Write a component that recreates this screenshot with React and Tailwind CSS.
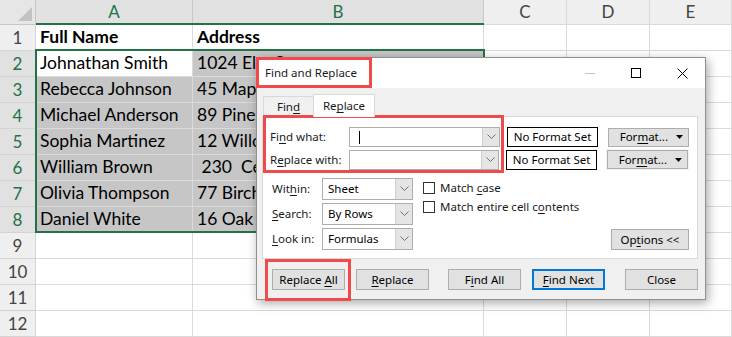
import React from "react";

const COLS = [36, 157, 291, 83, 83, 82];
const LETTERS = ["A", "B", "C", "D", "E"];

const rows = [
  ["Full Name", "Address"],
  ["Johnathan Smith", "1024 Elm Street"],
  ["Rebecca Johnson", "45 Maple Avenue"],
  ["Michael Anderson", "89 Pine Road"],
  ["Sophia Martinez", "12 Willow Lane"],
  ["William Brown", " 230  Cedar Drive"],
  ["Olivia Thompson", "77 Birch Court"],
  ["Daniel White", "16 Oak Street"],
  ["", ""],
  ["", ""],
  ["", ""],
  ["", ""],
];

const cellFont = { fontFamily: "Lato, 'Liberation Sans', sans-serif" };
const uiFont = { fontFamily: "'Segoe UI', 'Noto Sans', sans-serif" };

// letra subrayada (tecla de acceso)
function Ak({ text, k }) {
  const i = text.indexOf(k);
  if (i < 0) return <span>{text}</span>;
  return (
    <span className="whitespace-pre">
      {text.slice(0, i)}
      <span className="underline underline-offset-2">{k}</span>
      {text.slice(i + 1)}
    </span>
  );
}

function Chevron() {
  return (
    <svg width="9" height="6" viewBox="0 0 9 6">
      <polyline points="0.5,0.5 4.5,4.5 8.5,0.5" fill="none" stroke="#707070" strokeWidth="1" />
    </svg>
  );
}

function Combo({ w, h, children }) {
  return (
    <div
      className="flex bg-white border border-[#adadad] box-border"
      style={{ width: w, height: h }}
    >
      <div className="flex-1 flex items-center pl-[5px] text-black">{children}</div>
      <div className="w-[17px] bg-[#e5e5e5] border-l border-[#cfcfcf] flex items-center justify-center">
        <Chevron />
      </div>
    </div>
  );
}

function Btn({ children, focus, className = "" }) {
  return (
    <div
      className={`h-[21px] w-[73px] flex items-center justify-center bg-[#e1e1e1] text-black box-border ${
        focus ? "border-2 border-[#0078d7]" : "border border-[#adadad]"
      } ${className}`}
    >
      {children}
    </div>
  );
}

function FormatBtn() {
  return (
    <div className="h-[19px] w-[81px] bg-[#e1e1e1] border border-[#adadad] flex items-center justify-end pr-[5px] gap-[8px] text-black">
      <Ak text="Format..." k="m" />
      <svg width="7" height="4" viewBox="0 0 7 4">
        <polygon points="0,0 7,0 3.5,4" fill="#000" />
      </svg>
    </div>
  );
}

function Check({ children }) {
  return (
    <div className="flex items-center gap-[5px] h-[19px]">
      <div className="w-[12px] h-[12px] border border-[#333] bg-white" />
      <span className="whitespace-pre">{children}</span>
    </div>
  );
}

function Dialog() {
  return (
    <div
      className="absolute left-[256px] top-[57px] w-[450px] h-[243px] border border-[#8f8f8f] bg-[#f0f0f0] shadow-[2px_3px_10px_rgba(0,0,0,0.35)] text-[11.5px] text-[#1a1a1a]"
      style={uiFont}
    >
      {/* barra de título */}
      <div className="h-[30px] bg-white flex items-center">
        <span className="pl-[8px] flex-1">Find and Replace</span>
        <div className="flex items-center h-full">
          <div className="w-[46px] flex justify-center">
            <div className="w-[10px] h-px bg-[#c4c4c4]" />
          </div>
          <div className="w-[46px] flex justify-center">
            <div className="w-[10px] h-[10px] border border-black" />
          </div>
          <div className="w-[46px] flex justify-center">
            <svg width="11" height="11" viewBox="0 0 11 11">
              <path d="M0.5 0.5 L10.5 10.5 M10.5 0.5 L0.5 10.5" stroke="#000" strokeWidth="1" />
            </svg>
          </div>
        </div>
      </div>

      <div className="px-[5px] pt-[6px]">
        {/* pestañas */}
        <div className="flex items-end h-[22px] pl-[1px]">
          <div className="w-[50px] h-[20px] flex items-center justify-center border-t border-l border-[#d9d9d9]">
            <Ak text="Find" k="d" />
          </div>
          <div className="w-[62px] h-[23px] -mb-px relative z-10 flex items-center justify-center bg-white border border-b-0 border-[#d9d9d9]">
            <Ak text="Replace" k="p" />
          </div>
        </div>

        {/* panel */}
        <div className="w-[436px] h-[143px] bg-white border border-[#d9d9d9] pl-[7px] pr-[8px] pt-[10px]">
          <div className="flex flex-col gap-[2px]">
            <div className="flex items-center">
              <div className="w-[79px]">
                <Ak text="Find what:" k="n" />
              </div>
              <Combo w={151} h={20}>
                <div className="w-px h-[13px] bg-black ml-[4px]" />
              </Combo>
              <div className="ml-[7px] w-[91px] h-[20px] border border-black flex items-center justify-center text-black">
                No Format Set
              </div>
              <div className="ml-[10px]">
                <FormatBtn />
              </div>
            </div>
            <div className="flex items-center">
              <div className="w-[79px]">
                <Ak text="Replace with:" k="e" />
              </div>
              <Combo w={151} h={20} />
              <div className="ml-[7px] w-[91px] h-[20px] border border-black flex items-center justify-center text-black">
                No Format Set
              </div>
              <div className="ml-[9px] p-px bg-[#f2f2f2]">
                <FormatBtn />
              </div>
            </div>
          </div>

          <div className="flex mt-[8px]">
            <div className="flex flex-col gap-[3px] pl-[2px]">
              <div className="flex items-center">
                <div className="w-[50px]">
                  <Ak text="Within:" k="h" />
                </div>
                <Combo w={91} h={22}>Sheet</Combo>
              </div>
              <div className="flex items-center">
                <div className="w-[50px]">
                  <Ak text="Search:" k="S" />
                </div>
                <Combo w={91} h={22}>By Rows</Combo>
              </div>
              <div className="flex items-center">
                <div className="w-[50px]">
                  <Ak text="Look in:" k="L" />
                </div>
                <Combo w={91} h={22}>Formulas</Combo>
              </div>
            </div>
            <div className="ml-[10px] flex flex-col">
              <Check>
                Match <span className="underline underline-offset-2">c</span>ase
              </Check>
              <Check>
                Match entire cell c<span className="underline underline-offset-2">o</span>ntents
              </Check>
            </div>
            <div className="flex-1 flex items-end justify-end">
              <div className="w-[78px] h-[21px] bg-[#e1e1e1] border border-[#adadad] flex items-center justify-center text-black">
                <Ak text="Options <<" k="t" />
              </div>
            </div>
          </div>
        </div>

        {/* botones */}
        <div className="flex items-center mt-[10px] pl-[10px]">
          <Btn>
            <Ak text="Replace All" k="A" />
          </Btn>
          <Btn className="ml-[11px]">
            <Ak text="Replace" k="R" />
          </Btn>
          <Btn className="ml-[19px]">
            <Ak text="Find All" k="i" />
          </Btn>
          <Btn focus className="ml-[11px]">
            <Ak text="Find Next" k="F" />
          </Btn>
          <Btn className="ml-[20px]">Close</Btn>
        </div>
      </div>

      {/* resaltes rojos */}
      <div className="absolute left-[-1px] top-[-1px] w-[116px] h-[31px] border-[3px] border-[#f04a4c] pointer-events-none" />
      <div className="absolute left-[6px] top-[57px] w-[241px] h-[58px] border-[3px] border-[#f04a4c] pointer-events-none" />
      <div className="absolute left-[8px] top-[201px] w-[86px] h-[42px] border-[3px] border-[#f04a4c] pointer-events-none" />
    </div>
  );
}

export default function App() {
  return (
    <div className="relative w-[732px] h-[337px] overflow-hidden bg-white" style={cellFont}>
      <div
        className="grid"
        style={{ gridTemplateColumns: COLS.map((c) => c + "px").join(" ") }}
      >
        {/* cabecera de columnas */}
        <div className="h-[25px] bg-[#e6e6e6] border-r border-b border-[#c8c8c8] relative">
          <svg className="absolute right-[3px] bottom-[3px]" width="14" height="14" viewBox="0 0 14 14">
            <polygon points="14,0 14,14 0,14" fill="#c2c2c2" />
          </svg>
        </div>
        {LETTERS.map((l, i) => (
          <div
            key={l}
            className={`h-[25px] border-r border-b flex items-center justify-center text-[17px] ${
              i < 2
                ? "bg-[#e1e1e1] text-[#217346] border-[#c8c8c8]"
                : "bg-[#efefef] text-[#444] border-[#dadada]"
            }`}
          >
            {l}
          </div>
        ))}

        {rows.map((r, ri) => {
          const n = ri + 1;
          const sel = n >= 2 && n <= 8;
          return (
            <React.Fragment key={n}>
              <div
                className={`h-[26px] border-r border-b border-[#d4d4d4] flex items-center justify-center text-[17px] ${
                  sel ? "bg-[#e1e1e1] text-[#217346]" : "bg-[#efefef] text-[#444]"
                }`}
              >
                {n}
              </div>
              {[0, 1, 2, 3, 4].map((c) => {
                const inSel = sel && c < 2 && !(n === 2 && c === 0);
                const txt = c < 2 ? r[c] : "";
                return (
                  <div
                    key={c}
                    className={`h-[26px] border-r border-b border-[#dadada] flex items-center pl-[4px] overflow-hidden whitespace-pre text-[17.5px] text-black ${
                      inSel ? "bg-[#c6c6c6]" : "bg-white"
                    } ${n === 1 ? "font-bold" : ""}`}
                  >
                    {txt}
                  </div>
                );
              })}
            </React.Fragment>
          );
        })}
      </div>

      {/* selección */}
      <div className="absolute left-[36px] top-[23px] w-[448px] h-[2px] bg-[#217346]" />
      <div className="absolute left-[35px] top-[49px] w-[450px] h-[184px] border-2 border-[#217346] pointer-events-none" />

      <Dialog />
    </div>
  );
}
